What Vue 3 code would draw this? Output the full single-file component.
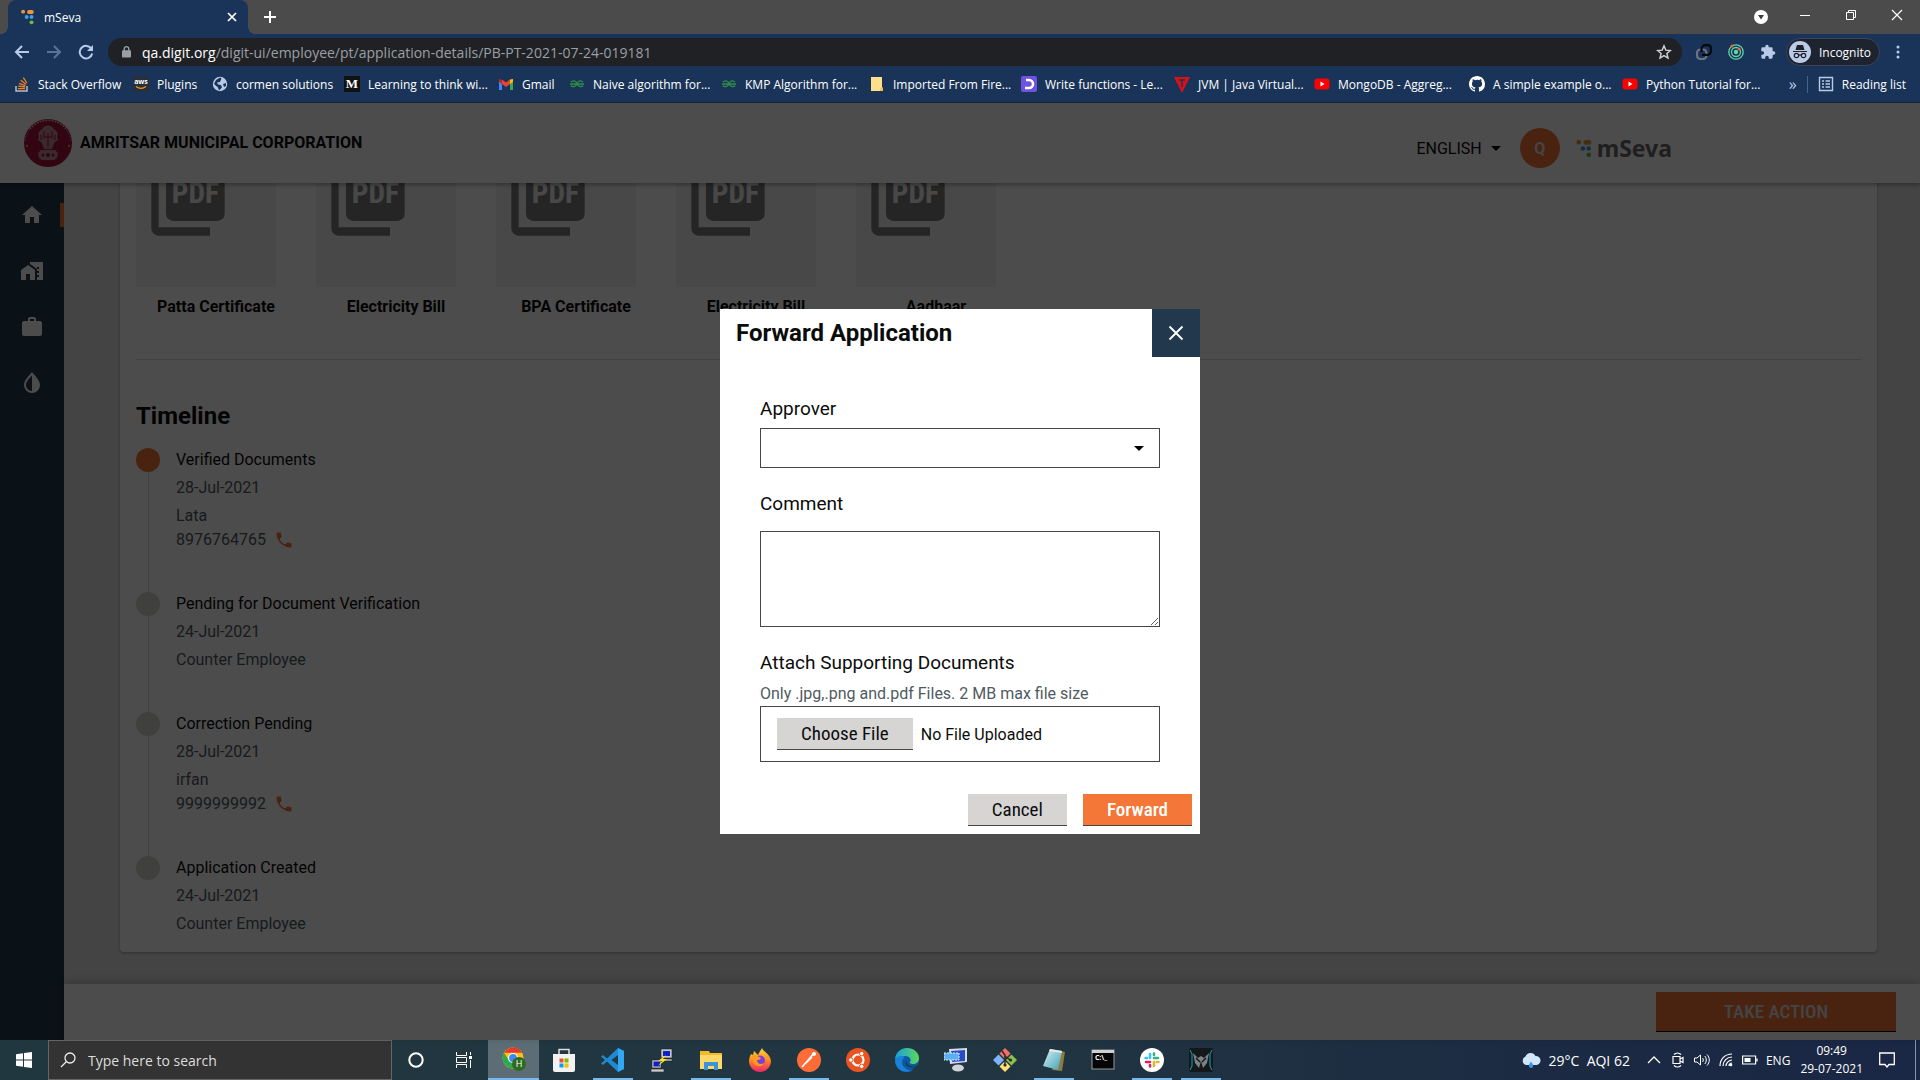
<template>
  <div class="desktop">
    <svg class="sprite" aria-hidden="true">
      <defs>
        <linearGradient id="g-fox" x1="0" y1="0" x2="0" y2="1">
          <stop offset="0" stop-color="#ffd83a" />
          <stop offset="0.5" stop-color="#ff8a1e" />
          <stop offset="1" stop-color="#f0246b" />
        </linearGradient>
        <linearGradient id="g-edge" x1="0" y1="0" x2="1" y2="0">
          <stop offset="0" stop-color="#1b9de0" />
          <stop offset="1" stop-color="#5ed65a" />
        </linearGradient>
        <linearGradient id="g-note" x1="0" y1="0" x2="1" y2="1">
          <stop offset="0" stop-color="#d8f3f7" />
          <stop offset="1" stop-color="#3f9fb4" />
        </linearGradient>
      </defs>
      <symbol id="i-mseva" viewBox="0 0 16 18">
        <circle cx="2.5" cy="3" r="2.2" fill="#e8973f" />
        <rect x="7" y="1" width="7.5" height="4.5" rx="2.2" fill="#e8973f" />
        <circle cx="6.5" cy="9" r="2.2" fill="#3f9fe0" />
        <circle cx="12" cy="9" r="2.2" fill="#3f9fe0" />
        <circle cx="12" cy="15" r="2.2" fill="#6cbb45" />
      </symbol>
      <symbol id="i-so" viewBox="0 0 16 16">
        <path d="M2 10v5h11v-5" fill="none" stroke="#bcbbbb" stroke-width="1.5" />
        <path d="M4 12.7h7M4.2 10.2l7 .8M5 7.3l6.4 2.4M6.7 4.3l5.3 4M9.3 1.6l3.6 5.4" stroke="#f48024" stroke-width="1.3" />
      </symbol>
      <symbol id="i-aws" viewBox="0 0 16 16">
        <rect width="16" height="16" fill="#252f3e" />
        <path d="M3 10.5c3 2.2 7 2.2 10 0" fill="none" stroke="#f90" stroke-width="1.2" />
      </symbol>
      <symbol id="i-globe" viewBox="0 0 16 16">
        <circle cx="8" cy="8" r="7.2" fill="#b9cbe8" />
        <path d="M4 4l4-2.500 1.500 1L8 6l-3 .5 1 2 3 .5 1 2.500-3 3-1-3-4-3.500z" fill="#1a3459" />
        <path d="M11 8l3-1v3l-2 1z" fill="#1a3459" />
      </symbol>
      <symbol id="i-medium" viewBox="0 0 16 16">
        <rect width="16" height="16" fill="#111" />
      </symbol>
      <symbol id="i-gmail" viewBox="0 0 16 16">
        <path d="M1 4v10h3V7z" fill="#4285f4" />
        <path d="M15 4v10h-3V7z" fill="#34a853" />
        <path d="M1 3l3 1v4L1 5.5z" fill="#c5221f" />
        <path d="M4 3.5l4 3 4-3V8l-4 3-4-3z" fill="#ea4335" />
        <path d="M12 3.500l3-.5v3L12 8z" fill="#fbbc04" />
      </symbol>
      <symbol id="i-gfg" viewBox="0 0 16 16">
        <path d="M2 6c4-2.500 5.500 0 5.500 2S4 12 2 9.500M1 8h14M14 6c-4-2.500-5.500 0-5.500 2S12 12 14 9.500" fill="none" stroke="#2f8d46" stroke-width="1.3" />
      </symbol>
      <symbol id="i-folder" viewBox="0 0 16 16">
        <path d="M2 1h11v10l1 1v3H2z" fill="#ffe08a" />
        <path d="M12 11l2 1v3h-3z" fill="#f0c14b" />
      </symbol>
      <symbol id="i-educative" viewBox="0 0 16 16">
        <rect width="16" height="16" rx="2" fill="#6f52e0" />
        <path d="M5 4h3a4 4 0 0 1 0 8H4" fill="none" stroke="#fff" stroke-width="2.600" />
      </symbol>
      <symbol id="i-jvm" viewBox="0 0 16 16">
        <path d="M0 1h16L8.500 16h-1z" fill="#d8101a" />
        <path d="M5 4h6M8 4v7" stroke="#1a3459" stroke-width="1.500" />
      </symbol>
      <symbol id="i-youtube" viewBox="0 0 16 16">
        <rect x="0.500" y="2.500" width="15" height="11" rx="3" fill="#f00" />
        <path d="M6.500 5.500v5l4-2.500z" fill="#fff" />
      </symbol>
      <symbol id="i-github" viewBox="0 0 16 16">
        <path fill="#fff" d="M8 0C3.580 0 0 3.580 0 8c0 3.540 2.290 6.530 5.470 7.590.4.070.550-.170.550-.380v-1.490c-2.010.370-2.530-.490-2.690-.940-.090-.230-.480-.940-.820-1.130-.280-.150-.680-.520-.010-.530.630-.010 1.080.580 1.230.820.720 1.210 1.870.870 2.330.660.070-.520.280-.870.510-1.070-1.780-.2-3.640-.890-3.640-3.950 0-.870.310-1.590.820-2.150-.080-.2-.360-1.020.080-2.120 0 0 .670-.210 2.200.820A7.600 7.600 0 0 1 8 3.860c.680 0 1.360.090 2 .270 1.530-1.040 2.200-.820 2.200-.820.440 1.100.160 1.920.080 2.120.510.560.820 1.270.820 2.150 0 3.070-1.870 3.750-3.650 3.950.290.250.540.730.540 1.480v2.200c0 .210.150.460.550.380A8 8 0 0 0 16 8c0-4.420-3.580-8-8-8z" />
      </symbol>
      <symbol id="i-home" viewBox="0 0 24 24">
        <path d="M10 20v-6h4v6h5v-8h3L12 3 2 12h3v8z" />
      </symbol>
      <symbol id="i-property" viewBox="0 0 24 24">
        <path d="M1 11v10h5v-6h4v6h5V11L8 6z" />
        <path d="M10 3v2l7 5v2h2v2h-2v2h2v2h-2v3h6V3zm9 7h-2V8h2z" />
      </symbol>
      <symbol id="i-case" viewBox="0 0 24 24">
        <path d="M20 6h-4V4c0-1.100-.9-2-2-2h-4c-1.100 0-2 .9-2 2v2H4c-1.100 0-2 .9-2 2v11c0 1.100.9 2 2 2h16c1.100 0 2-.9 2-2V8c0-1.100-.9-2-2-2zm-6 0h-4V4h4z" />
      </symbol>
      <symbol id="i-drop" viewBox="0 0 24 24">
        <path d="M12 1C9 5 4 9 4 14a8 8 0 0 0 16 0c0-5-5-9-8-13zm0 19a6 6 0 0 1-6-6c0-3.500 3.500-6.700 6-9.800z" />
      </symbol>
      <symbol id="i-phone" viewBox="0 0 24 24">
        <path d="M6.620 10.790c1.440 2.830 3.760 5.140 6.590 6.590l2.200-2.200c.270-.270.670-.360 1.020-.240 1.120.370 2.330.570 3.570.570.550 0 1 .450 1 1V20c0 .550-.450 1-1 1-9.390 0-17-7.610-17-17 0-.550.450-1 1-1h3.500c.550 0 1 .450 1 1 0 1.250.2 2.450.570 3.570.110.350.030.740-.250 1.020z" />
      </symbol>
      <symbol id="i-caret" viewBox="0 0 24 24">
        <path d="M7 10l5 5 5-5z" />
      </symbol>

      <symbol id="i-chrome" viewBox="0 0 24 24">
        <circle cx="11" cy="11" r="10.500" fill="#fbc116" />
        <path d="M1.900 5.800A10.500 10.500 0 0 1 20.100 5.800H11z" fill="#e33b2e" />
        <path d="M1.900 5.800A10.500 10.500 0 0 0 11 21.500l4-7-8-1z" fill="#2da94f" />
        <circle cx="11" cy="11" r="5" fill="#fff" />
        <circle cx="11" cy="11" r="3.900" fill="#4285f4" />
        <circle cx="17" cy="17" r="7" fill="#2f6b1d" />
      </symbol>
      <symbol id="i-store" viewBox="0 0 24 24">
        <path d="M7 7V1.500h10V7" fill="none" stroke="#ddd" stroke-width="1.500" />
        <path d="M1 6h22v16a2 2 0 0 1-2 2H3a2 2 0 0 1-2-2z" fill="#f2f2f2" />
        <path d="M7.500 10.500h4v4h-4z" fill="#f25022" />
        <path d="M12.500 10.500h4v4h-4z" fill="#7fba00" />
        <path d="M7.500 15.500h4v4h-4z" fill="#00a4ef" />
        <path d="M12.500 15.500h4v4h-4z" fill="#ffb900" />
      </symbol>
      <symbol id="i-vscode" viewBox="0 0 24 24">
        <path d="M17 0l6 3v18l-6 3L6 13.500 2 17l-2-1.500L4 12 0 8.500 2 7l4 3.500zM17 7l-6.500 5 6.500 5z" fill="#1f8ad2" fill-rule="evenodd" />
        <path d="M17 0l6 3v18l-6 3z" fill="#32a7f2" />
      </symbol>
      <symbol id="i-putty" viewBox="0 0 24 24">
        <path d="M11 1h11v9H11zM10 11h12v2H10zM2 12h9v8H2zM1 21h13v3H1z" fill="#c8c8c8" stroke="#222" stroke-width="0.600" />
        <path d="M13 3h7v5h-7zM3.500 13.500H10v5H3.500z" fill="#1020c8" />
        <path d="M16 7l-8 6h4l-4 5 9-7h-4z" fill="#ffe81a" />
      </symbol>
      <symbol id="i-explorer" viewBox="0 0 24 24">
        <path d="M1 3h9l1 2h12v16H1z" fill="#f7b92c" />
        <path d="M1 7h22v14H1z" fill="#ffd968" />
        <path d="M5 22v-8h14v8h-4v-4H9v4z" fill="#3b93d8" />
      </symbol>
      <symbol id="i-firefox" viewBox="0 0 24 24">
        <path d="M3 6l2 1 1-4 4 4c2-4 3-5 4-7 1 4 8 5 9 13 0 6-5 11-11 11S1 19 1 13c0-3 1-5 2-7z" fill="url(#g-fox)" />
        <circle cx="12" cy="12.500" r="5" fill="#7a3fe0" />
        <path d="M5 8c4-1 6 1 8 2-1 2-3 2-4 2 0 4 4 5 7 3-1 4-10 5-11-2z" fill="#ff9a1f" />
      </symbol>
      <symbol id="i-postman" viewBox="0 0 24 24">
        <circle cx="12" cy="12" r="12" fill="#ff6c37" />
        <path d="M5 19l8-9M12 11l5-6M9 15l6-6" stroke="#fff" stroke-width="1.600" />
        <circle cx="17" cy="6" r="2" fill="#fff" />
      </symbol>
      <symbol id="i-ubuntu" viewBox="0 0 24 24">
        <circle cx="12" cy="12" r="12" fill="#e95420" />
        <circle cx="12" cy="12" r="5.500" fill="none" stroke="#fff" stroke-width="2.200" />
        <g fill="#fff" stroke="#e95420">
          <circle cx="4.800" cy="12" r="2.200" />
          <circle cx="15.700" cy="5.700" r="2.200" />
          <circle cx="15.700" cy="18.300" r="2.200" />
        </g>
      </symbol>
      <symbol id="i-edge" viewBox="0 0 24 24">
        <circle cx="12" cy="12" r="12" fill="#0c59a4" />
        <path d="M0 11C1 4 6 0 12 0c7 0 12 5 12 10 0 4-3 6-6 6-2 0-4-1-3-2 2-3-1-6-5-6-5 0-8 2-10 3z" fill="url(#g-edge)" />
        <path d="M0 12c2-4 7-5 10-3-4 2-4 8 0 11 2 2 5 3 7 2C9 27 0 21 0 12z" fill="#1683d8" />
        <path d="M11 12c0 6 6 8 12 5l1 3-4 4-3-3c-5 0-8-5-6-9z" fill="#213641" />
        <path d="M10 13c0 6 6 8 11 5-4 5-11 4-12-2z" fill="#0c59a4" />
      </symbol>
      <symbol id="i-rdp" viewBox="0 0 24 24">
        <path d="M5 1l18-1v14L6 16z" fill="#d8dce8" />
        <path d="M7 3l14-1v11L8 14z" fill="#2b4bc4" />
        <path d="M0 5h15v7H0z" fill="#5bb0f0" stroke="#dcefff" stroke-dasharray="2 1" />
        <ellipse cx="14" cy="20" rx="6" ry="3.500" fill="#d0d4da" />
      </symbol>
      <symbol id="i-git" viewBox="0 0 24 24">
        <path d="M12 0l5.500 5.500L12 11 6.500 5.500z" fill="#f07167" />
        <path d="M5.500 6.500L11 12l-5.500 5.500L0 12z" fill="#80b3ff" />
        <path d="M18.500 6.500L24 12l-5.500 5.500L13 12z" fill="#8dc149" />
        <path d="M12 13l5.500 5.500L12 24l-5.500-5.500z" fill="#ffe072" />
        <path d="M9 3l3 4v9M12 8l5 4" fill="none" stroke="#2a2a2a" stroke-width="1.500" />
        <circle cx="12" cy="17" r="1.600" fill="#2a2a2a" />
        <circle cx="17.500" cy="12" r="1.600" fill="#2a2a2a" />
      </symbol>
      <symbol id="i-notepad" viewBox="0 0 24 24">
        <path d="M19 3l4 1-3 19-10-1z" fill="#8f7c3c" />
        <path d="M8 1l12 2-4 19L1 18z" fill="url(#g-note)" />
        <path d="M8 1l12 2v2L7 3z" fill="#e8e8e8" />
      </symbol>
      <symbol id="i-cmd" viewBox="0 0 24 24">
        <rect x="1" y="2" width="22" height="19" fill="#050505" stroke="#9a9a9a" />
        <path d="M1 2h22v3H1z" fill="#cfcfcf" />
      </symbol>
      <symbol id="i-slack" viewBox="0 0 24 24">
        <circle cx="12" cy="12" r="12" fill="#fff" />
        <g fill="none" stroke-width="2.600" stroke-linecap="round">
          <path d="M10 6v4M5.500 10H7" stroke="#36c5f0" />
          <path d="M14 10h4M14 5.500V7" stroke="#2eb67d" />
          <path d="M14 14v4M17 14h1.500" stroke="#ecb22e" />
          <path d="M6 14h4M10 17v1.500" stroke="#e01e5a" />
        </g>
      </symbol>
      <symbol id="i-predator" viewBox="0 0 24 24">
        <rect width="24" height="24" rx="2" fill="#15181b" />
        <path d="M1 2l2 4v12l-2 4M23 2l-2 4v12l2 4" fill="none" stroke="#0fa8bd" />
        <path d="M4 5l5 5 3-2 3 2 5-5-2 10-4 5-2-7-2 7-4-5z" fill="#7d8286" />
        <path d="M7 10l4 4M17 10l-4 4" stroke="#15181b" stroke-width="1.500" />
      </symbol>
    </svg>

    <header class="browser">
      <div class="tab-strip">
        <div class="tab">
          <svg class="icon-16"><use href="#i-mseva" /></svg>
          <span class="tab-title">mSeva</span>
          <button class="plain" aria-label="Close tab">
            <svg class="icon-16" viewBox="0 0 16 16"><path d="M4 4l8 8M12 4l-8 8" stroke="#fff" stroke-width="1.700" /></svg>
          </button>
        </div>
        <button class="plain new-tab" aria-label="New tab">
          <svg class="icon-16" viewBox="0 0 16 16"><path d="M8 2v12M2 8h12" stroke="#fff" stroke-width="2" /></svg>
        </button>
        <div class="window-controls">
          <button class="plain" aria-label="Search tabs">
            <svg class="icon-16" viewBox="0 0 16 16"><circle cx="8" cy="9" r="7" fill="#fff" /><path d="M5 7h6l-3 4.500z" fill="#3c3c3c" /></svg>
          </button>
          <button class="plain" aria-label="Minimize">
            <svg class="icon-16" viewBox="0 0 16 16"><path d="M3 8.500h10" stroke="#fff" /></svg>
          </button>
          <button class="plain" aria-label="Restore">
            <svg class="icon-16" viewBox="0 0 16 16"><path d="M3.500 5.500h7v7h-7zM5.500 5.500v-2h7v7h-2" fill="none" stroke="#fff" /></svg>
          </button>
          <button class="plain" aria-label="Close">
            <svg class="icon-16" viewBox="0 0 16 16"><path d="M3 3l10 10M13 3L3 13" stroke="#fff" stroke-width="1.200" /></svg>
          </button>
        </div>
      </div>

      <div class="toolbar">
        <button class="plain" aria-label="Back">
          <svg class="icon-16" viewBox="0 0 16 16"><path d="M15 8H2M8 2L2 8l6 6" fill="none" stroke="#b9cbe8" stroke-width="2" /></svg>
        </button>
        <button class="plain" aria-label="Forward">
          <svg class="icon-16" viewBox="0 0 16 16"><path d="M1 8h13M8 2l6 6-6 6" fill="none" stroke="#5a7499" stroke-width="2" /></svg>
        </button>
        <button class="plain" aria-label="Reload">
          <svg class="icon-16" viewBox="0 0 16 16"><path d="M13.500 5A6.300 6.300 0 1 0 14.200 9.500" fill="none" stroke="#b9cbe8" stroke-width="2" /><path d="M15 1v6H9z" fill="#b9cbe8" /></svg>
        </button>
        <div class="address">
          <svg class="lock" viewBox="0 0 10 14"><rect y="5" width="10" height="8" rx="1" fill="#9aa0a6" /><path d="M2.500 6V3.500a2.500 2.500 0 0 1 5 0V6" fill="none" stroke="#9aa0a6" stroke-width="1.500" /></svg>
          <span class="url"><b>qa.digit.org</b>/digit-ui/employee/pt/application-details/PB-PT-2021-07-24-019181</span>
          <button class="plain" aria-label="Bookmark this tab">
            <svg class="icon-16" viewBox="0 0 16 16"><path d="M8 1.800l1.800 4.300 4.600.4-3.500 3 1.100 4.500L8 11.600 4 14l1.100-4.500-3.500-3 4.600-.4z" fill="none" stroke="#d0d3d7" stroke-width="1.400" /></svg>
          </button>
        </div>
        <div class="extensions">
          <svg class="icon-16" viewBox="0 0 16 16"><rect x="1" y="5.500" width="9.500" height="9.500" rx="3.500" fill="none" stroke="#6b7482" stroke-width="2.200" /><path d="M5.500 8V5A4 4 0 0 1 9.500 1.200H12A2.800 2.800 0 0 1 14.800 4v3.500A3.300 3.300 0 0 1 11.500 10.800H6" fill="none" stroke="#07080b" stroke-width="2.200" /></svg>
          <svg class="icon-16" viewBox="0 0 16 16"><g fill="none" stroke="#5fd6a4" stroke-width="1.300"><circle cx="8" cy="8" r="7.200" /><circle cx="8" cy="8" r="4.500" /></g><circle cx="8" cy="8" r="2.200" fill="#5fd6a4" /><circle cx="4" cy="2" r="1.500" fill="#f0663c" /><circle cx="11" cy="5" r="1.500" fill="#f0663c" /></svg>
          <svg class="icon-16" viewBox="0 0 24 24"><path fill="#b9cbe8" d="M20.500 11H19V7a2 2 0 0 0-2-2h-4V3.500a2.500 2.500 0 0 0-5 0V5H4a2 2 0 0 0-2 2v3.800h1.500a2.700 2.700 0 0 1 0 5.400H2V20a2 2 0 0 0 2 2h3.800v-1.500a2.700 2.700 0 0 1 5.400 0V22H17a2 2 0 0 0 2-2v-4h1.500a2.500 2.500 0 0 0 0-5z" /></svg>
        </div>
        <button class="incognito">
          <svg viewBox="0 0 22 22"><circle cx="11" cy="11" r="11" fill="#b9cbe8" /><path d="M8 4h6l1.500 5h-9zM4 10h14v1H4z" fill="#202124" /><g fill="none" stroke="#202124" stroke-width="1.200"><circle cx="7.500" cy="14.500" r="2.200" /><circle cx="14.500" cy="14.500" r="2.200" /><path d="M9.700 14h2.600" /></g></svg>
          Incognito
        </button>
        <button class="plain" aria-label="Menu">
          <svg class="icon-16" viewBox="0 0 16 16"><g fill="#b9cbe8"><circle cx="8" cy="3" r="1.500" /><circle cx="8" cy="8" r="1.500" /><circle cx="8" cy="13" r="1.500" /></g></svg>
        </button>
      </div>

      <nav class="bookmarks">
        <a v-for="mark in bookmarks" :key="mark.label" href="#">
          <svg class="icon-16" :class="'glyph-' + mark.icon" viewBox="0 0 16 16">
            <use :href="'#i-' + mark.icon" />
            <text v-if="mark.glyph" x="8" :y="mark.glyphY" text-anchor="middle">{{ mark.glyph }}</text>
          </svg>
          {{ mark.label }}
        </a>
        <div class="reading">
          <span class="more">»</span>
          <a href="#">
            <svg class="icon-16" viewBox="0 0 16 16"><path d="M1.500 1.500h13v13h-13z" fill="none" stroke="#b9cbe8" stroke-width="1.400" /><path d="M4 5h2M4 8h2M4 11h2M7.500 5H12M7.500 8H12M7.500 11H12" stroke="#b9cbe8" stroke-width="1.500" /></svg>
            Reading list
          </a>
        </div>
      </nav>
    </header>

    <div class="page">
      <header class="topbar">
        <svg class="emblem" viewBox="0 0 48 48">
          <circle cx="24" cy="24" r="24" fill="#a3123f" />
          <path d="M6 10A23 23 0 0 1 42 10" fill="none" stroke="#d8b4c0" stroke-dasharray="2 1" stroke-width="1.500" />
          <path d="M1.500 22A23 23 0 0 1 6 10M46.500 22A23 23 0 0 0 42 10" fill="none" stroke="#d8b4c0" stroke-dasharray="1 1" />
          <circle cx="3" cy="27" r="1.200" fill="#d9a92c" />
          <circle cx="45" cy="27" r="1.200" fill="#d9a92c" />
          <g fill="#c48a9c">
            <path d="M20 8c2-2 6-2 8 0l3 3 3 3-1 4 1 3-4 3H18l-4-3 1-3-1-4 3-3z" />
            <path d="M18 24h12l-2 6h-8zM17 31h14l3 3-1 5-3 2H18l-3-2-1-5z" />
          </g>
          <path d="M20 12v8M28 12v8M17 16v5M31 16v5M24 14v14M21 18h6" stroke="#a3123f" />
          <g fill="#a3123f">
            <circle cx="24" cy="36" r="2" />
            <circle cx="19" cy="36" r="1.500" />
            <circle cx="29" cy="36" r="1.500" />
          </g>
        </svg>
        <span class="city">AMRITSAR MUNICIPAL CORPORATION</span>
        <div class="topbar-right">
          <button class="plain language">
            ENGLISH
            <svg class="icon-24"><use href="#i-caret" /></svg>
          </button>
          <button class="avatar">Q</button>
          <div class="brand">
            <svg viewBox="0 0 16 18"><use href="#i-mseva" /></svg>
            mSeva
          </div>
        </div>
      </header>

      <div class="body">
        <nav class="sidebar">
          <a v-for="item in menu" :key="item.icon" href="#" :aria-label="item.label" :class="{ active: item.active }">
            <svg class="icon-24"><use :href="'#i-' + item.icon" /></svg>
          </a>
        </nav>
        <main class="main">
          <div class="content">
            <section class="card">
              <div class="documents">
                <figure v-for="(doc, i) in documents" :key="i">
                  <div class="thumb">
                    <svg viewBox="0 0 24 24">
                      <rect x="6" y="2" width="16" height="16" rx="2" fill="#7d7d7d" />
                      <path d="M4 6H2v14c0 1.100.9 2 2 2h14v-2.300H4z" fill="#7d7d7d" />
                      <text x="14" y="13" text-anchor="middle">PDF</text>
                    </svg>
                  </div>
                  <figcaption>{{ doc }}</figcaption>
                </figure>
              </div>
              <hr />
              <h2>Timeline</h2>
              <ol class="timeline">
                <li v-for="(step, i) in timeline" :key="i" :class="{ current: i === 0 }">
                  <p class="step-title">{{ step.title }}</p>
                  <p>{{ step.date }}</p>
                  <p>{{ step.by }}</p>
                  <a v-if="step.phone" :href="'tel:' + step.phone">
                    {{ step.phone }}
                    <svg><use href="#i-phone" /></svg>
                  </a>
                </li>
              </ol>
            </section>
          </div>
          <footer class="action-bar">
            <button class="take-action">TAKE ACTION</button>
          </footer>
        </main>
      </div>

      <div class="overlay">
        <form class="modal" role="dialog" aria-labelledby="modal-title" @submit.prevent>
          <div class="modal-header">
            <h1 id="modal-title">Forward Application</h1>
            <button type="button" class="close" aria-label="Close dialog">
              <svg class="icon-24" viewBox="0 0 24 24"><path d="M5.500 5.500l13 13M18.500 5.500l-13 13" stroke="#fff" stroke-width="1.900" /></svg>
            </button>
          </div>
          <div class="modal-body">
            <div class="field">
              <label for="approver">Approver</label>
              <div class="select">
                <select id="approver" v-model="approver">
                  <option value=""></option>
                </select>
                <svg class="icon-24"><use href="#i-caret" /></svg>
              </div>
            </div>
            <div class="field comment">
              <label for="comment">Comment</label>
              <textarea id="comment" v-model="comment"></textarea>
            </div>
            <div class="field">
              <label for="file">Attach Supporting Documents</label>
              <p class="hint">Only .jpg,.png and.pdf Files. 2 MB max file size</p>
              <div class="upload">
                <input id="file" ref="fileInput" type="file" hidden @change="onFile" />
                <button type="button" class="btn" @click="fileInput.click()">Choose File</button>
                <span>{{ fileName }}</span>
              </div>
            </div>
          </div>
          <div class="modal-footer">
            <button type="button" class="btn">Cancel</button>
            <button type="submit" class="btn primary">Forward</button>
          </div>
        </form>
      </div>
    </div>

    <footer class="taskbar">
      <button class="plain start" aria-label="Start">
        <svg class="icon-16" viewBox="0 0 16 16"><path d="M0 2.200l7-1v6.300H0zM8 1l8-1v7.500H8zM0 8.500h7v6.300l-7-1zM8 8.500h8V16l-8-1z" fill="#fff" /></svg>
      </button>
      <label class="search">
        <svg class="icon-16" viewBox="0 0 16 16"><circle cx="10" cy="6" r="5" fill="none" stroke="#eee" stroke-width="1.300" /><path d="M6.500 9.500L1 15" stroke="#eee" stroke-width="1.300" /></svg>
        <input type="text" aria-label="Search" placeholder="Type here to search" />
      </label>
      <button class="plain system" aria-label="Cortana">
        <svg class="icon-16" viewBox="0 0 16 16"><circle cx="8" cy="8" r="6.700" fill="none" stroke="#fff" stroke-width="2" /></svg>
      </button>
      <button class="plain system" aria-label="Task view">
        <svg class="icon-16" viewBox="0 0 16 16"><path d="M.5 0v3.500h10V0M.5 16v-3.500h10V16M.5 5.500h10v5H.5zM14.500 0v3M14.500 8v8" fill="none" stroke="#fff" /><path d="M13 4h3v3h-3z" fill="#fff" /></svg>
      </button>
      <button v-for="app in apps" :key="app.icon" class="plain task" :class="{ open: app.open, focused: app.focused }" :aria-label="app.icon">
        <svg class="icon-24" :class="'glyph-' + app.icon" viewBox="0 0 24 24">
          <use :href="'#i-' + app.icon" />
          <text v-if="app.glyph" :x="app.glyphX" :y="app.glyphY" text-anchor="middle">{{ app.glyph }}</text>
        </svg>
      </button>
      <div class="tray">
        <svg class="weather" viewBox="0 0 20 16"><path d="M5 13a4.500 4.500 0 0 1-.5-8.500A5.500 5.500 0 0 1 14.500 4 4.500 4.500 0 0 1 15.500 13z" fill="#cfe6fb" /><path d="M10 9.500l2 3.300a2.200 2.200 0 1 1-4 0z" fill="#3c93e6" /></svg>
        <span class="temp">29°C&nbsp; AQI 62</span>
        <svg class="icon-16" viewBox="0 0 16 16"><path d="M2 11l6-6 6 6" fill="none" stroke="#fff" stroke-width="1.300" /></svg>
        <svg class="icon-16" viewBox="0 0 16 16"><path d="M3 4.500h7v7H3zM10 7l3-1.500v5L10 9M4 2.500C6 .5 9 .5 11 2.500M4 13.500c2 2 5 2 7 0" fill="none" stroke="#fff" stroke-width="1.200" /></svg>
        <svg class="icon-16" viewBox="0 0 16 16"><path d="M.5 6h2.500l3.500-3v10L3 10H.5zM8.500 6c1 1 1 3 0 4M10.800 4c2 2 2 6 0 8M13 2.500c3 3 3 8 0 11" fill="none" stroke="#fff" /></svg>
        <svg class="icon-16" viewBox="0 0 16 16"><g fill="none" stroke="#fff" stroke-width="1.200"><path d="M2 14C2 7 7 2 14 2M5 14c0-5 4-9 9-9M8 14c0-3 3-6 6-6M11 14c0-2 1-3 3-3" /></g><circle cx="13" cy="13" r="1.300" fill="#fff" /></svg>
        <svg class="icon-16" viewBox="0 0 16 16"><path d="M.6 4h13v8H.6zM15 6.500v3" fill="none" stroke="#fff" stroke-width="1.200" /><path d="M2.500 6h6v4h-6z" fill="#fff" /></svg>
        <span>ENG</span>
        <time class="clock">09:49<br />29-07-2021</time>
        <svg class="icon-16" viewBox="0 0 16 16"><path d="M.7 1h14.600v11.500H10L8 15l-2-2.500H.7z" fill="none" stroke="#fff" stroke-width="1.300" /></svg>
      </div>
    </footer>
  </div>
</template>

<script setup>
import { ref } from "vue";

const approver = ref("");
const comment = ref("");
const fileInput = ref(null);
const fileName = ref("No File Uploaded");

const onFile = (event) => {
  const file = event.target.files[0];
  fileName.value = file ? file.name : "No File Uploaded";
};

const bookmarks = [
  { icon: "so", label: "Stack Overflow" },
  { icon: "aws", label: "Plugins", glyph: "aws", glyphY: 8 },
  { icon: "globe", label: "cormen solutions" },
  { icon: "medium", label: "Learning to think wi...", glyph: "M", glyphY: 12 },
  { icon: "gmail", label: "Gmail" },
  { icon: "gfg", label: "Naive algorithm for..." },
  { icon: "gfg", label: "KMP Algorithm for..." },
  { icon: "folder", label: "Imported From Fire..." },
  { icon: "educative", label: "Write functions - Le..." },
  { icon: "jvm", label: "JVM | Java Virtual..." },
  { icon: "youtube", label: "MongoDB - Aggreg..." },
  { icon: "github", label: "A simple example o..." },
  { icon: "youtube", label: "Python Tutorial for..." },
];

const menu = [
  { icon: "home", label: "Home", active: true },
  { icon: "property", label: "Property tax" },
  { icon: "case", label: "Services" },
  { icon: "drop", label: "Water" },
];

const documents = [
  "Patta Certificate",
  "Electricity Bill",
  "BPA Certificate",
  "Electricity Bill",
  "Aadhaar",
];

const timeline = [
  { title: "Verified Documents", date: "28-Jul-2021", by: "Lata", phone: "8976764765" },
  { title: "Pending for Document Verification", date: "24-Jul-2021", by: "Counter Employee" },
  { title: "Correction Pending", date: "28-Jul-2021", by: "irfan", phone: "9999999992" },
  { title: "Application Created", date: "24-Jul-2021", by: "Counter Employee" },
];

const apps = [
  { icon: "chrome", focused: true, glyph: "H", glyphX: 17, glyphY: 20 },
  { icon: "store" },
  { icon: "vscode", open: true },
  { icon: "putty" },
  { icon: "explorer", open: true },
  { icon: "firefox" },
  { icon: "postman", open: true },
  { icon: "ubuntu" },
  { icon: "edge" },
  { icon: "rdp" },
  { icon: "git" },
  { icon: "notepad", open: true },
  { icon: "cmd", glyph: "C:\\_", glyphX: 10, glyphY: 12 },
  { icon: "slack", open: true },
  { icon: "predator", open: true },
];
</script>

<style>
body {
  margin: 0;
}
</style>

<style scoped>
* {
  box-sizing: border-box;
}

.desktop {
  display: flex;
  flex-direction: column;
  height: 100vh;
  overflow: hidden;
  font-family: Roboto, sans-serif;
  font-size: 16px;
  color: #0b0c0c;
}

.sprite {
  position: absolute;
  width: 0;
  height: 0;
}

svg {
  display: block;
  flex-shrink: 0;
}

a {
  color: inherit;
  text-decoration: none;
}

button {
  font-family: inherit;
  font-size: inherit;
  cursor: pointer;
}

.plain {
  display: flex;
  align-items: center;
  justify-content: center;
  padding: 0;
  border: none;
  background: none;
  color: inherit;
}

.icon-16 {
  width: 16px;
  height: 16px;
}

.icon-24 {
  width: 24px;
  height: 24px;
}

/* letters drawn over icons */
.glyph-aws text {
  fill: #fff;
  font-size: 7px;
  font-weight: 700;
}

.glyph-medium text {
  fill: #fff;
  font-family: "Liberation Serif", serif;
  font-size: 13px;
  font-weight: 700;
}

.glyph-chrome text {
  fill: #fff;
  font-size: 9px;
}

.glyph-cmd text {
  fill: #fff;
  font-size: 7px;
  font-weight: 700;
}

/* browser window */
.browser {
  background-color: #1a3459;
  color: #fff;
  font-family: "Open Sans", sans-serif;
  font-size: 12px;
  border-bottom: 1px solid #14243c;
}

.tab-strip {
  display: flex;
  align-items: center;
  height: 34px;
  padding-left: 8px;
  background-color: #4b4b4b;
}

.tab {
  position: relative;
  display: flex;
  align-items: center;
  gap: 8px;
  width: 240px;
  height: 34px;
  padding: 0 8px 0 12px;
  border-radius: 8px 8px 0 0;
  background-color: #1a3459;
}

/* flared feet of the active tab */
.tab::before,
.tab::after {
  content: "";
  position: absolute;
  bottom: 0;
  width: 8px;
  height: 8px;
}

.tab::before {
  left: -8px;
  background: radial-gradient(circle at 0 0, transparent 8px, #1a3459 8px);
}

.tab::after {
  right: -8px;
  background: radial-gradient(circle at 100% 0, transparent 8px, #1a3459 8px);
}

.tab-title {
  flex: 1;
}

.new-tab {
  margin-left: 14px;
}

.window-controls {
  display: flex;
  gap: 30px;
  margin-left: auto;
  padding: 0 15px 4px 0;
}

.window-controls button:first-child {
  margin-right: -2px;
  padding-top: 1px;
}

.toolbar {
  display: flex;
  align-items: center;
  gap: 16px;
  height: 36px;
  padding: 0 14px;
}

.address {
  display: flex;
  flex: 1;
  align-items: center;
  gap: 11px;
  height: 28px;
  margin-left: -2px;
  padding: 0 10px 0 14px;
  border-radius: 14px;
  background-color: #202124;
}

.lock {
  width: 9px;
  height: 14px;
}

.url {
  flex: 1;
  font-size: 14px;
  color: #9aa0a6;
}

.url b {
  font-weight: 400;
  color: #fff;
}

.extensions {
  display: flex;
  gap: 16px;
  margin-left: -2px;
}

.incognito {
  display: flex;
  align-items: center;
  gap: 8px;
  height: 28px;
  padding: 0 8px 0 2px;
  margin: 0 -6px;
  border: 1px solid #3a4557;
  border-radius: 14px;
  background-color: #1d2430;
  color: #fff;
}

.incognito svg {
  width: 22px;
  height: 22px;
}

.bookmarks {
  display: grid;
  grid-template-columns: 119px 79px 132px 154px 71px 152px 148px 152px 153px 140px 155px 153px 130px 1fr;
  align-items: center;
  height: 32px;
  padding: 0 14px 4px;
  white-space: nowrap;
}

.bookmarks a {
  display: flex;
  align-items: center;
  gap: 8px;
}

.reading {
  display: flex;
  justify-content: flex-end;
  align-items: center;
  gap: 10px;
}

.reading a {
  padding-left: 10px;
  border-left: 1px solid #4a6488;
}

.more {
  font-size: 16px;
  line-height: 16px;
  color: #b9cbe8;
}

/* application */
.page {
  position: relative;
  display: flex;
  flex: 1;
  flex-direction: column;
  min-height: 0;
  background-color: #e3e3e3;
}

.topbar {
  z-index: 1;
  display: flex;
  align-items: center;
  gap: 8px;
  height: 80px;
  padding: 0 248px 0 24px;
  background-color: #fff;
  box-shadow: 0 2px 4px rgba(0, 0, 0, 0.3);
}

.emblem {
  width: 48px;
  height: 48px;
}

.city {
  padding-bottom: 2px;
  font-weight: 700;
}

.topbar-right {
  display: flex;
  align-items: center;
  margin-left: auto;
  padding-top: 10px;
}

.language svg {
  margin-left: 2px;
}

.avatar {
  width: 40px;
  height: 40px;
  margin: 0 16px 0 12px;
  border: none;
  border-radius: 50%;
  background-color: #f47738;
  color: #e3e3e3;
  font-weight: 700;
}

.brand {
  display: flex;
  align-items: center;
  gap: 4px;
  font-family: "Noto Sans", "Open Sans", sans-serif;
  font-size: 23px;
  font-weight: 700;
  line-height: 24px;
  color: #6a6a6a;
}

.brand svg {
  width: 17px;
  height: 19px;
}

.body {
  display: flex;
  flex: 1;
  min-height: 0;
}

.sidebar {
  display: flex;
  flex-direction: column;
  gap: 32px;
  width: 64px;
  padding-top: 20px;
  background-color: #22394d;
  fill: #fff;
}

.sidebar a {
  padding-left: 20px;
}

.sidebar .active {
  border-right: 4px solid #f47738;
}

.main {
  display: flex;
  flex: 1;
  flex-direction: column;
}

/* scrolled to its end, so the top of the card is cut off */
.content {
  display: flex;
  flex: 1;
  flex-direction: column;
  justify-content: flex-end;
  min-height: 0;
  padding: 0 43px 32px 56px;
  overflow: hidden;
}

.card {
  flex-shrink: 0;
  padding: 16px;
  border-radius: 4px;
  background-color: #fff;
  box-shadow: 0 1px 3px rgba(0, 0, 0, 0.3);
}

.documents {
  display: flex;
  gap: 20px;
}

figure {
  width: 160px;
  margin: 0;
}

.thumb {
  width: 140px;
  height: 140px;
  padding: 8px;
  background-color: #f2f2f2;
}

.thumb svg {
  width: 88px;
  height: 88px;
}

.thumb text {
  fill: #f0f0f0;
  font-family: "Roboto Condensed", Roboto, sans-serif;
  font-size: 8px;
  font-weight: 700;
}

figcaption {
  margin-top: 8px;
  font-weight: 700;
  line-height: 24px;
  text-align: center;
}

hr {
  height: 1px;
  margin: 40px 0;
  border: none;
  background-color: #d6d5d4;
}

h2 {
  margin: 0 0 16px;
  font-size: 24px;
  line-height: 32px;
}

.timeline {
  margin: 0;
  padding: 0;
  list-style: none;
}

.timeline li {
  position: relative;
  padding: 0 0 40px 40px;
  line-height: 24px;
  color: #505a5f;
}

.timeline li::before {
  content: "";
  position: absolute;
  top: 0;
  left: 0;
  width: 24px;
  height: 24px;
  border-radius: 50%;
  background-color: #d6d5d4;
}

.timeline li::after {
  content: "";
  position: absolute;
  top: 24px;
  bottom: 0;
  left: 12px;
  width: 1px;
  background-color: #d6d5d4;
}

.timeline .current::before {
  background-color: #f47738;
}

.timeline li:last-child {
  padding-bottom: 0;
}

.timeline li:last-child::after {
  display: none;
}

.timeline p {
  margin: 0;
}

.timeline p + p {
  margin-top: 4px;
}

.timeline .step-title {
  color: #0b0c0c;
}

.timeline a {
  display: flex;
  align-items: center;
  gap: 8px;
}

.timeline a svg {
  width: 20px;
  height: 20px;
  fill: #f47738;
}

.action-bar {
  display: flex;
  justify-content: flex-end;
  align-items: center;
  height: 56px;
  padding: 0 24px;
  background-color: #fff;
  box-shadow: 0 -2px 8px rgba(0, 0, 0, 0.2);
}

.take-action {
  width: 240px;
  height: 40px;
  border: none;
  border-bottom: 1px solid #0b0c0c;
  background-color: #f47738;
  color: #e3e3e3;
  font-family: "Roboto Condensed", "Liberation Sans Narrow", Roboto, sans-serif;
  font-size: 19px;
  font-weight: 500;
}

/* dialog */
.overlay {
  position: absolute;
  inset: 0;
  z-index: 2;
  display: flex;
  align-items: center;
  justify-content: center;
  background-color: rgba(0, 0, 0, 0.7);
}

.modal {
  width: 480px;
  background-color: #fff;
}

.modal-header {
  display: flex;
  justify-content: space-between;
  padding-left: 16px;
}

h1 {
  margin: 0;
  font-size: 24px;
  line-height: 48px;
}

.close {
  display: flex;
  align-items: center;
  justify-content: center;
  width: 48px;
  height: 48px;
  border: none;
  background-color: #22394d;
}

.modal-body {
  display: flex;
  flex-direction: column;
  gap: 24px;
  padding: 40px 40px 32px;
}

.field {
  display: flex;
  flex-direction: column;
  gap: 8px;
}

.comment {
  gap: 16px;
}

.field label {
  font-size: 19px;
  line-height: 23px;
}

.select {
  display: grid;
  align-items: center;
}

.select > * {
  grid-area: 1 / 1;
}

.select svg {
  justify-self: end;
  margin-right: 9px;
  pointer-events: none;
}

select,
textarea {
  width: 100%;
  height: 40px;
  margin: 0;
  padding: 0 8px;
  border: 1px solid #464646;
  border-radius: 0;
  background-color: #fff;
  appearance: none;
  font-family: inherit;
  font-size: 16px;
}

textarea {
  height: 96px;
}

.hint {
  margin: 0 0 -8px;
  line-height: 24px;
  color: #505a5f;
}

.upload {
  display: flex;
  align-items: center;
  gap: 8px;
  height: 56px;
  padding: 0 16px;
  border: 1px solid #464646;
}

.btn {
  height: 32px;
  padding: 0 24px;
  border: none;
  border-bottom: 1px solid #464646;
  background-color: #d6d5d4;
  color: #0b0c0c;
  font-family: "Roboto Condensed", "Liberation Sans Narrow", Roboto, sans-serif;
  font-size: 19px;
}

.btn.primary {
  background-color: #f47738;
  color: #fff;
  font-weight: 500;
}

.modal-footer {
  display: flex;
  justify-content: flex-end;
  gap: 16px;
  padding: 0 8px 8px;
}

/* taskbar */
.taskbar {
  display: flex;
  height: 40px;
  background: linear-gradient(90deg, #21373f, #213641 50%, #1b2943 85%, #1a2745);
  color: #fff;
  font-family: "Open Sans", sans-serif;
  font-size: 12px;
}

.start {
  width: 48px;
}

.search {
  display: flex;
  align-items: center;
  gap: 12px;
  width: 344px;
  padding: 0 11px;
  border: 1px solid #666;
  background-color: #333;
}

.search input {
  flex: 1;
  min-width: 0;
  padding: 0;
  border: none;
  outline: none;
  background: none;
  color: #ddd;
  font-family: inherit;
  font-size: 14px;
}

.search input::placeholder {
  color: #ddd;
}

.system {
  width: 48px;
}

.task {
  width: 49px;
}

.open {
  background: linear-gradient(#76b9ed, #76b9ed) center bottom / 40px 2px no-repeat;
}

.focused {
  width: 51px;
  border-bottom: 2px solid #76b9ed;
  background-color: #5d6d75;
}

.tray {
  display: flex;
  align-items: center;
  gap: 8px;
  margin-left: auto;
  margin-right: 4px;
  padding-right: 20px;
  border-right: 1px solid #8b93a3;
}

.weather {
  width: 20px;
  height: 16px;
}

.temp {
  margin-right: 8px;
  font-size: 14px;
}

.clock {
  margin: 0 8px 0 2px;
  line-height: 18px;
  text-align: center;
}
</style>
